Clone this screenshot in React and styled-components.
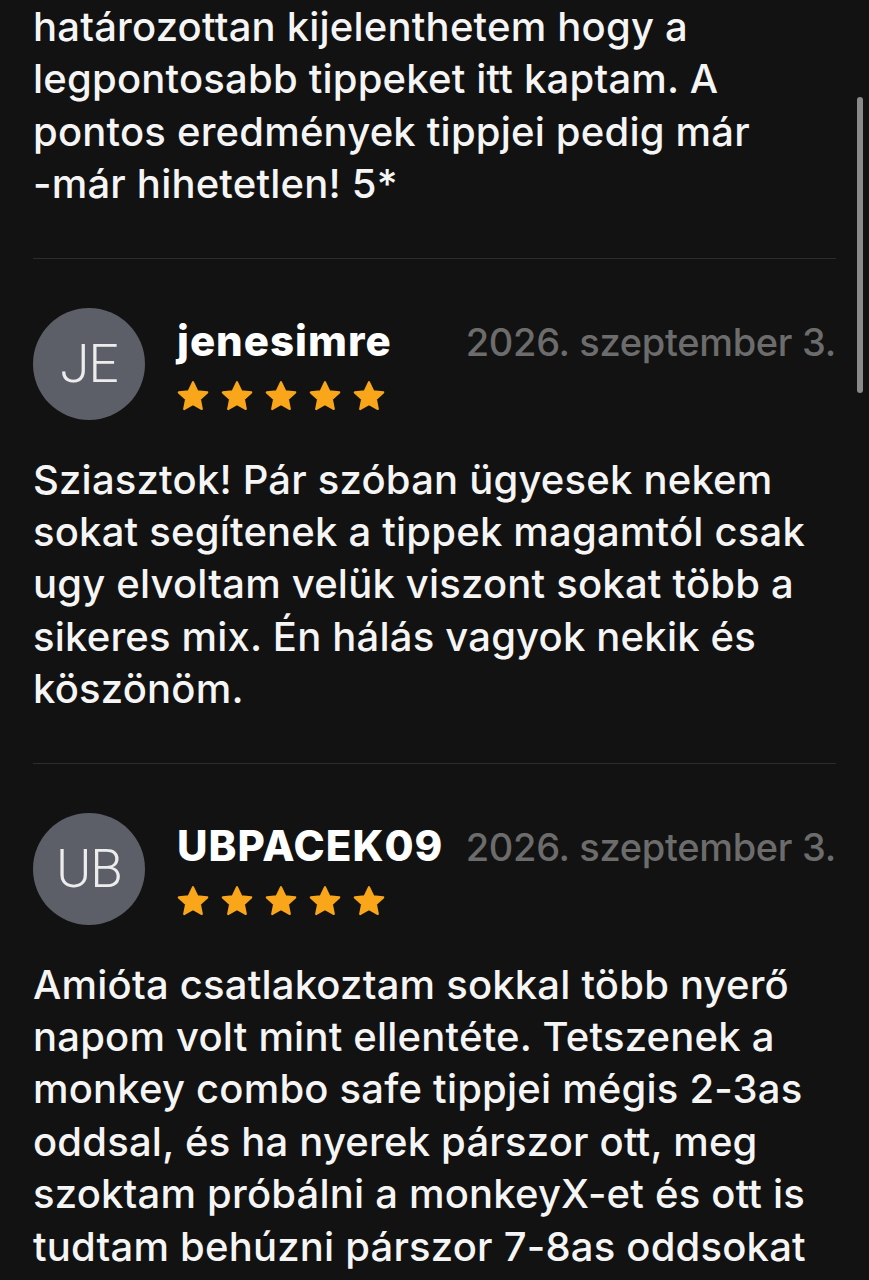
import styled, { createGlobalStyle } from "styled-components"

const GlobalStyle = createGlobalStyle`
  html, body {
    margin: 0;
    padding: 0;
    background: #121212;
  }
  body {
    font-family: Inter, "Noto Sans", "Liberation Sans", sans-serif;
    -webkit-font-smoothing: antialiased;
  }
`

const Page = styled.div`
  position: relative;
  width: 869px;
  height: 1280px;
  overflow: hidden;
  background: #121212;
  color: #f5f5f5;
  padding: 1px 33px 0 33px;
  box-sizing: border-box;
`

const Review = styled.section`
  display: flex;
  flex-direction: column;
  border-top: ${({ $first }) => ($first ? "none" : "1px solid #2c2c2c")};
  padding-top: ${({ $first }) => ($first ? "0" : "49px")};
  padding-bottom: 47px;
`

const Header = styled.div`
  display: flex;
  align-items: flex-start;
  gap: 32px;
  margin-bottom: 34px;
`

const Avatar = styled.div`
  flex: none;
  width: 112px;
  height: 112px;
  border-radius: 50%;
  background: #5c5f68;
  display: flex;
  align-items: center;
  justify-content: center;
  color: #ececec;
  font-family: Roboto, "Open Sans", sans-serif;
  font-weight: 300;
  font-size: 53px;
  letter-spacing: -1px;
`

const Info = styled.div`
  flex: 1;
  display: flex;
  flex-direction: column;
  padding-top: 12px;
`

const TopRow = styled.div`
  display: flex;
  justify-content: space-between;
  align-items: baseline;
  line-height: 42px;
`

const Name = styled.span`
  font-size: 42px;
  font-weight: 800;
  color: #ffffff;
  letter-spacing: 1px;
`

const DateText = styled.span`
  font-size: 38px;
  font-weight: 500;
  color: #6c6c6c;
  letter-spacing: -0.3px;
`

const Stars = styled.div`
  display: flex;
  gap: 12px;
  margin-top: 17px;
`

const Body = styled.p`
  margin: 0;
  font-size: 40px;
  line-height: 52.4px;
  font-weight: 500;
  color: #f5f5f5;
  letter-spacing: 0.2px;
  white-space: nowrap;
`

const Scrollbar = styled.div`
  position: absolute;
  left: 857px;
  top: 97px;
  width: 6px;
  height: 296px;
  border-radius: 3px;
  background: #8a8a8a;
`

function Star() {
  return (
    <svg width="32" height="32" viewBox="1.4 1.6 21.2 20.4">
      <path
        d="M12 2.6l2.85 6.05 6.6.75-4.9 4.5 1.3 6.55L12 17.2l-5.85 3.25 1.3-6.55-4.9-4.5 6.6-.75z"
        fill="#f9a61a"
        stroke="#f9a61a"
        strokeWidth="1.4"
        strokeLinejoin="round"
      />
    </svg>
  )
}

const reviews = [
  {
    lines: [
      "határozottan kijelenthetem hogy a",
      "legpontosabb tippeket itt kaptam. A",
      "pontos eredmények tippjei pedig már",
      "-már hihetetlen! 5*"
    ]
  },
  {
    initials: "JE",
    name: "jenesimre",
    date: "2026. szeptember 3.",
    lines: [
      "Sziasztok! Pár szóban ügyesek nekem",
      "sokat segítenek a tippek magamtól csak",
      "ugy elvoltam velük viszont sokat több a",
      "sikeres mix. Én hálás vagyok nekik és",
      "köszönöm."
    ]
  },
  {
    initials: "UB",
    name: "UBPACEK09",
    date: "2026. szeptember 3.",
    lines: [
      "Amióta csatlakoztam sokkal több nyerő",
      "napom volt mint ellentéte. Tetszenek a",
      "monkey combo safe tippjei mégis 2-3as",
      "oddsal, és ha nyerek párszor ott, meg",
      "szoktam próbálni a monkeyX-et és ott is",
      "tudtam behúzni párszor 7-8as oddsokat"
    ]
  }
]

export default function App() {
  return (
    <>
      <GlobalStyle />
      <Page>
        {reviews.map((r, i) => (
          <Review key={i} $first={i === 0}>
            {r.name && (
              <Header>
                <Avatar>{r.initials}</Avatar>
                <Info>
                  <TopRow>
                    <Name>{r.name}</Name>
                    <DateText>{r.date}</DateText>
                  </TopRow>
                  <Stars>
                    {[0, 1, 2, 3, 4].map((s) => (
                      <Star key={s} />
                    ))}
                  </Stars>
                </Info>
              </Header>
            )}
            <Body>
              {r.lines.map((l, j) => (
                <span key={j}>
                  {l}
                  {j < r.lines.length - 1 && <br />}
                </span>
              ))}
            </Body>
          </Review>
        ))}
        <Scrollbar />
      </Page>
    </>
  )
}
